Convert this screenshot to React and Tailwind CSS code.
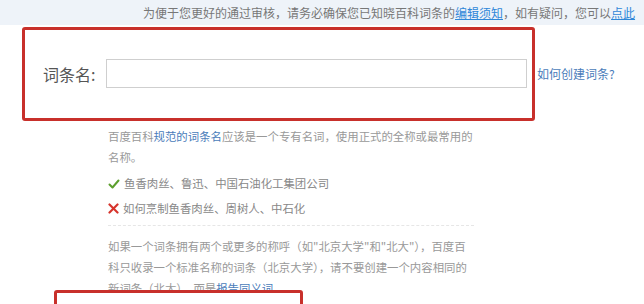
import React from 'react';

const CheckIcon = () => (
  <svg width="12" height="12" viewBox="0 0 12 12" fill="none" stroke="#5c9f2e" strokeWidth="2" strokeLinecap="round" strokeLinejoin="round"><polyline points="1.5 6.5 4.5 9.5 10.5 2.5" /></svg>
);

const CrossIcon = () => (
  <svg width="11" height="11" viewBox="0 0 11 11" fill="none" stroke="#d6332b" strokeWidth="2.2" strokeLinecap="round"><line x1="1.5" y1="1.5" x2="9.5" y2="9.5" /><line x1="9.5" y1="1.5" x2="1.5" y2="9.5" /></svg>
);

export default function App() {
  return (
    <div
      className="relative w-[644px] h-[304px] overflow-hidden bg-white"
      style={{ fontFamily: '"Noto Sans CJK SC", "Noto Sans", sans-serif' }}
    >
      {/* Notice bar */}
      <div className="h-[25px] bg-[#eef3f9] pl-[143px] flex items-center whitespace-nowrap overflow-hidden text-[12px] text-[#777]">
        为便于您更好的通过审核，请务必确保您已知晓百科词条的
        <span className="text-[#2f87d8] underline">编辑须知</span>
        ，如有疑问，您可以
        <span className="text-[#2f87d8] underline">点此</span>
      </div>

      {/* Name row */}
      <div className="flex items-center mt-[2px] ml-[22px]">
        <div className="w-[513px] border-[3px] border-[#c8302b] rounded-[3px] flex items-center pl-[18px] pr-[5px] pt-[29px] pb-[30px]">
          <label className="w-[63px] shrink-0 text-[16px] text-[#555]">词条名:</label>
          <input className="flex-1 h-[29px] border border-[#cfcfcf] bg-white outline-none" />
        </div>
        <a className="ml-[2px] text-[12px] text-[#4a7cba] whitespace-nowrap">如何创建词条?</a>
      </div>

      {/* Rules */}
      <div className="ml-[108px] w-[366px] mt-[5px] text-[11.4px] text-[#999] whitespace-nowrap">
        <p className="leading-[21px]">
          <span className="block">百度百科<span className="text-[#4a7cba]">规范的词条名</span>应该是一个专有名词，使用正式的全称或最常用的</span>
          <span className="block">名称。</span>
        </p>
        <div className="mt-[3px] h-[25px] flex items-center gap-[4px] text-[#888]">
          <CheckIcon />
          <span>鱼香肉丝、鲁迅、中国石油化工集团公司</span>
        </div>
        <div className="h-[25px] flex items-center gap-[4px] text-[#888]">
          <CrossIcon />
          <span>如何烹制鱼香肉丝、周树人、中石化</span>
        </div>
        <div className="mt-[4px] border-t border-dashed border-[#e6e6e6]" />
        <p className="mt-[10px] leading-[21px]">
          <span className="block">如果一个词条拥有两个或更多的称呼（如"北京大学"和"北大"），百度百</span>
          <span className="block">科只收录一个标准名称的词条（北京大学），请不要创建一个内容相同的</span>
          <span className="block">新词条（北大），而是<span className="text-[#4a7cba]">报告同义词</span></span>
        </p>
      </div>

      {/* Annotation box over the next field */}
      <div className="absolute left-[54px] top-[290px] w-[249px] h-[30px] border-[3px] border-[#c8302b] rounded-[3px] bg-white" />
    </div>
  );
}
